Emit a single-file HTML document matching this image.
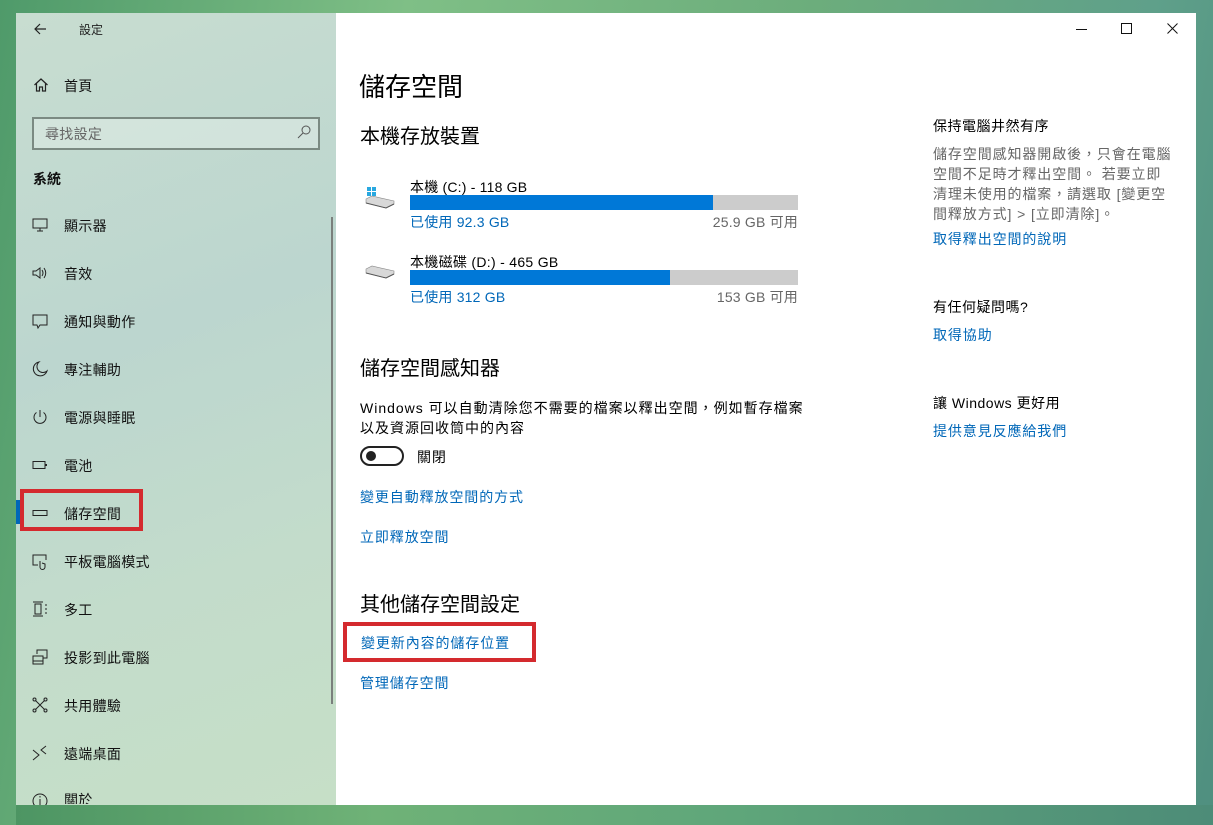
<!DOCTYPE html>
<html><head><meta charset="utf-8"><style>
*{margin:0;padding:0;box-sizing:border-box}
body{width:1213px;height:825px;overflow:hidden;position:relative;font-family:"Liberation Sans","Noto Sans CJK TC",sans-serif;color:#000;
background:linear-gradient(100deg,#4f9a6a 0%,#7fbf86 30%,#6cad7c 60%,#5fa08a 85%,#4f8f7f 100%)}
.a{position:absolute;white-space:nowrap}
#side{position:absolute;left:16px;top:13px;width:320px;height:792px;background:linear-gradient(160deg,#c8ddd0 0%,#bcd6cf 40%,#c3dccb 70%,#c6dfc7 100%)}
#main{position:absolute;left:336px;top:13px;width:860px;height:792px;background:#fff}
.nav{font-size:14px;color:#111;letter-spacing:.3px}
.lk{color:#0067b8;font-size:14px;letter-spacing:.9px}
.g{color:#666;font-size:14px;letter-spacing:.9px}
.t{font-size:14px;letter-spacing:.9px}
svg{position:absolute;overflow:visible}
</style></head><body>
<div id="side"></div>
<div id="main"></div>
<svg style="left:33px;top:22px" width="14" height="14"><path d="M13 7H2M7 2L2 7l5 5" stroke="#222" stroke-width="1.2" fill="none"/></svg>
<div class="a" style="left:79px;top:21px;font-size:12px;color:#222">設定</div>
<svg style="left:33px;top:77px" width="16" height="16"><path d="M1.5 8L8 2l6.5 6M3.5 6.5V14h3v-4h3v4h3V6.5" stroke="#222" stroke-width="1.2" fill="none"/></svg>
<div class="a nav" style="left:64px;top:76px">首頁</div>
<div class="a" style="left:32px;top:117px;width:288px;height:33px;border:2px solid #7b8a82;background:rgba(230,240,235,.45)"></div>
<div class="a" style="left:45px;top:124px;font-size:14px;color:#666;letter-spacing:.3px">尋找設定</div>
<svg style="left:297px;top:125px" width="14" height="14"><circle cx="9" cy="5" r="4" stroke="#555" fill="none"/><path d="M6 8L1 13" stroke="#555"/></svg>
<div class="a" style="left:33px;top:169px;font-size:14px;font-weight:bold;color:#111">系統</div>
<div class="a" style="left:331px;top:217px;width:2px;height:487px;background:#7a7f7c"></div>

<svg style="left:32px;top:217px" width="16" height="16"><rect x="1" y="2" width="14" height="9" stroke="#222" fill="none"/><path d="M5 14h6M8 11v3" stroke="#222"/></svg>
<div class="a nav" style="left:64px;top:216px">顯示器</div>
<svg style="left:32px;top:265px" width="16" height="16"><path d="M1 6h3l4-3v10L4 10H1z" stroke="#222" fill="none"/><path d="M10 5q2 3 0 6M12 3q3.5 5 0 10" stroke="#222" fill="none"/></svg>
<div class="a nav" style="left:64px;top:264px">音效</div>
<svg style="left:32px;top:313px" width="16" height="16"><path d="M1 2h14v10H8l-2 3-1-3H1z" stroke="#222" fill="none"/></svg>
<div class="a nav" style="left:64px;top:312px">通知與動作</div>
<svg style="left:32px;top:361px" width="16" height="16"><path d="M7 1a7 7 0 1 0 8 9A6 6 0 0 1 7 1z" stroke="#222" fill="none"/></svg>
<div class="a nav" style="left:64px;top:360px">專注輔助</div>
<svg style="left:32px;top:409px" width="16" height="16"><path d="M4.5 3.5a6 6 0 1 0 7 0M8 1v7" stroke="#222" fill="none"/></svg>
<div class="a nav" style="left:64px;top:408px">電源與睡眠</div>
<svg style="left:32px;top:457px" width="16" height="16"><rect x="1" y="4.5" width="12" height="7" stroke="#222" fill="none"/><path d="M14 7v2" stroke="#222" stroke-width="2"/></svg>
<div class="a nav" style="left:64px;top:456px">電池</div>
<div class="a" style="left:16px;top:500px;width:4px;height:24px;background:#0067b8"></div>
<svg style="left:32px;top:505px" width="16" height="16"><rect x="1" y="5.5" width="14" height="5" stroke="#222" fill="none"/></svg>
<div class="a nav" style="left:64px;top:504px">儲存空間</div>
<div class="a" style="left:20px;top:489px;width:123px;height:42px;border:4px solid #d42a2e"></div>
<svg style="left:32px;top:553px" width="16" height="16"><path d="M6 12H1V2h13v5" stroke="#222" fill="none"/><path d="M8 8v6a2 2 0 0 0 5 0v-3l-3-1" stroke="#222" fill="none"/></svg>
<div class="a nav" style="left:64px;top:552px">平板電腦模式</div>
<svg style="left:32px;top:601px" width="16" height="16"><path d="M1 1h10M1 15h10M3 3h6v10H3z" stroke="#222" fill="none"/><path d="M14 3v2M14 7v2M14 11v2" stroke="#222"/></svg>
<div class="a nav" style="left:64px;top:600px">多工</div>
<svg style="left:32px;top:649px" width="16" height="16"><path d="M5 5V1h10v8h-4M1 7h10v8H1zM1 12h10" stroke="#222" fill="none"/></svg>
<div class="a nav" style="left:64px;top:648px">投影到此電腦</div>
<svg style="left:32px;top:697px" width="16" height="16"><path d="M3 3l10 10M13 3L3 13" stroke="#222"/><circle cx="2.5" cy="2.5" r="1.5" fill="#c4dccd" stroke="#222"/><circle cx="13.5" cy="2.5" r="1.5" fill="#c4dccd" stroke="#222"/><circle cx="2.5" cy="13.5" r="1.5" fill="#c4dccd" stroke="#222"/><circle cx="13.5" cy="13.5" r="1.5" fill="#c4dccd" stroke="#222"/></svg>
<div class="a nav" style="left:64px;top:696px">共用體驗</div>
<svg style="left:32px;top:745px" width="16" height="16"><path d="M1 5l6 5-6 5M14 1l-5 4 5 4" stroke="#222" fill="none"/></svg>
<div class="a nav" style="left:64px;top:744px">遠端桌面</div>
<svg style="left:32px;top:793px" width="16" height="12"><circle cx="8" cy="8" r="7" stroke="#222" fill="none"/><path d="M8 6v6M8 3v1.5" stroke="#222"/></svg>
<div class="a nav" style="left:64px;top:790px;height:14px;overflow:hidden">關於</div>
<div class="a" style="left:16px;top:805px;width:1197px;height:20px;background:linear-gradient(90deg,#4d9563,#6fb277 30%,#5fa67a 60%,#4d8c78)"></div>

<svg style="left:1076px;top:29px" width="12" height="2"><path d="M0 .5h11" stroke="#111"/></svg>
<svg style="left:1121px;top:23px" width="12" height="12"><rect x=".5" y=".5" width="10" height="10" stroke="#111" fill="none"/></svg>
<svg style="left:1167px;top:23px" width="12" height="12"><path d="M.5 .5l10 10M10.5 .5l-10 10" stroke="#111"/></svg>

<div class="a" style="left:359px;top:67px;font-size:26px;color:#000">儲存空間</div>
<div class="a" style="left:360px;top:120px;font-size:20px">本機存放裝置</div>
<svg style="left:364px;top:186px" width="32" height="24"><path d="M2 13l6-3 22 5v3l-8 4L2 17z" fill="#d8d8d8" stroke="#888" stroke-width=".6"/><path d="M2 17l20 5 8-4" fill="none" stroke="#555"/><rect x="3" y="1" width="4" height="4" fill="#29a8e0"/><rect x="8" y="1" width="4" height="4" fill="#29a8e0"/><rect x="3" y="6" width="4" height="4" fill="#29a8e0"/><rect x="8" y="6" width="4" height="4" fill="#29a8e0"/></svg>
<div class="a t" style="left:410px;top:177px;letter-spacing:.2px">本機 (C:) - 118 GB</div>
<div class="a" style="left:410px;top:195px;width:388px;height:15px;background:#ccc"></div>
<div class="a" style="left:410px;top:195px;width:303px;height:15px;background:#0078d7"></div>
<div class="a lk" style="left:410px;top:212px;letter-spacing:.2px">已使用 92.3 GB</div>
<div class="a g" style="left:698px;top:212px;width:100px;text-align:right;letter-spacing:.2px">25.9 GB 可用</div>
<svg style="left:364px;top:264px" width="32" height="20"><path d="M2 5l6-3 22 5v3l-8 4L2 9z" fill="#d8d8d8" stroke="#888" stroke-width=".6"/><path d="M2 9l20 5 8-4" fill="none" stroke="#555"/></svg>
<div class="a t" style="left:410px;top:252px;letter-spacing:.3px">本機磁碟 (D:) - 465 GB</div>
<div class="a" style="left:410px;top:270px;width:388px;height:15px;background:#ccc"></div>
<div class="a" style="left:410px;top:270px;width:260px;height:15px;background:#0078d7"></div>
<div class="a lk" style="left:410px;top:287px;letter-spacing:.2px">已使用 312 GB</div>
<div class="a g" style="left:698px;top:287px;width:100px;text-align:right;letter-spacing:.2px">153 GB 可用</div>

<div class="a" style="left:360px;top:352px;font-size:20px">儲存空間感知器</div>
<div class="a t" style="left:360px;top:398px;line-height:20px;letter-spacing:1px">Windows 可以自動清除您不需要的檔案以釋出空間，例如暫存檔案<br>以及資源回收筒中的內容</div>
<div class="a" style="left:360px;top:446px;width:44px;height:20px;border:2px solid #222;border-radius:10px"></div>
<div class="a" style="left:366px;top:451px;width:10px;height:10px;border-radius:5px;background:#222"></div>
<div class="a t" style="left:417px;top:447px">關閉</div>
<div class="a lk" style="left:360px;top:487px">變更自動釋放空間的方式</div>
<div class="a lk" style="left:360px;top:527px">立即釋放空間</div>

<div class="a" style="left:360px;top:588px;font-size:20px">其他儲存空間設定</div>
<div class="a" style="left:343px;top:622px;width:193px;height:40px;border:4px solid #d42a2e"></div>
<div class="a lk" style="left:361px;top:633px">變更新內容的儲存位置</div>
<div class="a lk" style="left:360px;top:673px">管理儲存空間</div>

<div class="a t" style="left:933px;top:116px;letter-spacing:.5px">保持電腦井然有序</div>
<div class="a g" style="left:933px;top:144px;line-height:20px">儲存空間感知器開啟後，只會在電腦<br>空間不足時才釋出空間。 若要立即<br>清理未使用的檔案，請選取 [變更空<br>間釋放方式] &gt; [立即清除]。</div>
<div class="a lk" style="left:933px;top:229px">取得釋出空間的說明</div>
<div class="a t" style="left:933px;top:297px;letter-spacing:.5px">有任何疑問嗎?</div>
<div class="a lk" style="left:933px;top:325px">取得協助</div>
<div class="a t" style="left:933px;top:393px;letter-spacing:.5px">讓 Windows 更好用</div>
<div class="a lk" style="left:933px;top:421px">提供意見反應給我們</div>
</body></html>
